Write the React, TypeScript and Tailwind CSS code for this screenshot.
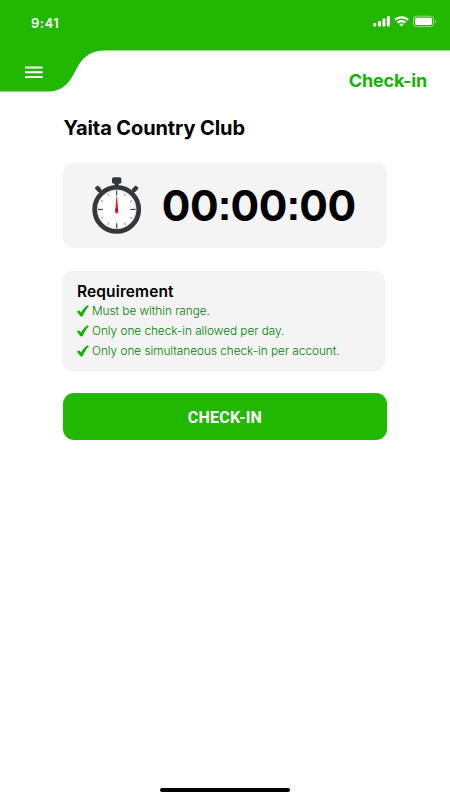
const requirements = [
  'Must be within range.',
  'Only one check-in allowed per day.',
  'Only one simultaneous check-in per account.',
];

function StatusIcons() {
  return (
    <svg width="64" height="14" viewBox="0 0 64 14" fill="none">
      <g fill="#fff">
        <rect x="0.3" y="8" width="3" height="3.6" rx="1" />
        <rect x="5" y="6" width="3" height="5.6" rx="1" />
        <rect x="9.4" y="3.6" width="3" height="8" rx="1" />
        <rect x="13.8" y="1" width="3" height="10.6" rx="1" />
        <path d="M21.2 4.1C25.1.2 31.9.2 35.8 4.1L34.2 5.7C31.1 2.8 25.9 2.8 22.8 5.7Z" />
        <path d="M23.8 6.8C26.4 4.4 30.6 4.4 33.2 6.8L31.6 8.4C29.8 6.8 27.2 6.8 25.4 8.4Z" />
        <path d="M26.3 9.3C27.6 8.2 29.4 8.2 30.7 9.3L28.5 11.6Z" />
        <rect x="42" y="2.8" width="17" height="7.2" rx="1.4" />
        <path d="M62 4.8C63.5 5.3 63.5 7.7 62 8.2Z" opacity=".5" />
      </g>
      <rect x="40.5" y="1.2" width="20" height="10.4" rx="2.8" stroke="#fff" strokeOpacity=".5" />
    </svg>
  );
}

function Stopwatch() {
  return (
    <svg width="52" height="60" viewBox="0 0 52 60">
      <g fill="#32393d">
        <rect x="21" y="1.2" width="9.4" height="6.6" rx="1.8" />
        <rect x="23.7" y="6" width="4" height="5" />
        <rect x="-2.2" y="-3" width="4.4" height="6" rx="1" transform="translate(7.2 12.9) rotate(-43)" />
        <rect x="-2.2" y="-3" width="4.4" height="6" rx="1" transform="translate(44.2 12.9) rotate(43)" />
        <path d="M8 12L13 17L11 19L6 14ZM43.400 12L38.400 17L40.400 19L45.400 14Z" />
      </g>
      <circle cx="25.700" cy="33.400" r="22" fill="#fff" stroke="#32393d" strokeWidth="4.8" />
      <circle cx="25.700" cy="33.400" r="19.300" fill="none" stroke="#c9cccd" strokeWidth="0.7" />
      {Array.from({ length: 12 }, (_, i) => (
        <path
          key={i}
          d={i % 3 === 0 ? 'M25.700 14.600V19.600' : 'M25.700 15.400V17.900'}
          stroke={i % 3 === 0 ? '#32393d' : '#73797b'}
          strokeWidth={i % 3 === 0 ? 1.1 : 0.8}
          transform={`rotate(${i * 30} 25.7 33.4)`}
        />
      ))}
      <path d="M25.400 20.500H26L27.300 36.500H24.100Z" fill="#f5141c" />
      <circle cx="25.700" cy="33.600" r="1.200" fill="#4b2528" />
      <circle cx="25.700" cy="36.500" r="1.100" fill="#f5141c" />
    </svg>
  );
}

function Check() {
  return (
    <svg width="12" height="12" viewBox="0 0 12 12" className="shrink-0">
      <path d="M0.300 6.200C1.700 4.900 2.900 5.600 4.200 7.500C5.700 4.600 7.800 1.800 10.200 0.500C11.500 0.100 12.100 0.900 11.400 1.800C8.800 4.400 7.300 7.500 5.900 10.700C5.200 11.700 3.400 11.600 2.900 10.700C2.100 9.100 1.500 8 0.300 7.200Z" fill="#12b000" />
    </svg>
  );
}

function Timer({ value }: { value: string }) {
  return (
    <div className="flex text-[42.500px] font-bold leading-[48px]">
      {value.split('').map((char, i) =>
        char === ':' ? (
          <span key={i} className="flex w-[12.400px] justify-center font-['Liberation_Sans',sans-serif] font-bold">:</span>
        ) : (
          <span key={i} className="flex w-[28.200px] justify-center">{char}</span>
        ),
      )}
    </div>
  );
}

export default function App() {
  return (
    <div className="flex h-[800px] w-[450px] flex-col overflow-hidden bg-white font-['Inter','Liberation_Sans',sans-serif] text-black">
      <header className="relative h-[92px] shrink-0">
        <svg className="absolute inset-0" width="450" height="92" viewBox="0 0 450 92">
          <path d="M0 0H450V50.500H105C92 50.500 84 56 78 66L73.500 74.500C68 84.500 61 91.500 48 91.500H0Z" fill="#22b802" />
        </svg>
        <div className="relative flex h-[50px] items-start justify-between pl-[31px] pr-[13px] pt-[15px]">
          <span className="text-[13px] font-semibold leading-4 tracking-[0.5px] text-white">9:41</span>
          <StatusIcons />
        </div>
        <div className="relative flex items-start justify-between pl-[25px] pr-[23px] pt-4">
          <svg width="18" height="13" viewBox="0 0 18 13" fill="#fff">
            <path d="M0 0.500H17.600V2.400H0ZM0 5.300H17.600V7.200H0ZM0 10.100H17.600V12H0Z" />
          </svg>
          <h1 className="mt-px whitespace-nowrap text-[18px] font-bold leading-7 tracking-[-0.200px] text-[#12b500]">Check-in</h1>
        </div>
      </header>

      <main className="flex flex-col pl-[62px] pr-[63px]">
        <h2 className="mt-[22px] whitespace-nowrap pl-[1.500px] text-[20px] font-bold leading-7 tracking-[-0.100px]">Yaita Country Club</h2>
        <section className="ml-px mt-[21px] flex h-[85px] w-[324px] items-start rounded-[10px] bg-[#f4f4f4] pl-[28px] pt-[13px]">
          <Stopwatch />
          <div className="ml-[19px] mt-[5.500px]">
            <Timer value="00:00:00" />
          </div>
        </section>
        <section className="mt-[22.500px] flex h-[100.500px] w-[323px] flex-col rounded-[10px] bg-[#f4f4f4] pl-[15px] pt-[11px]">
          <h3 className="whitespace-nowrap text-[15.500px] font-semibold leading-5 tracking-[0.120px]">Requirement</h3>
          <ul className="text-[11.800px] font-light tracking-[-0.030px] text-[#008000]">
            {requirements.map((text) => (
              <li key={text} className="flex h-[19.700px] items-center gap-[3px]">
                <Check />
                <span className="mt-[1.500px] whitespace-nowrap">{text}</span>
              </li>
            ))}
          </ul>
        </section>
        <button className="ml-px mt-[22px] h-[47px] w-[324px] rounded-[11px] bg-[#22b802] pt-[2px] font-['Roboto',sans-serif] text-[16px] font-bold tracking-[0.2px] text-white">CHECK-IN</button>
      </main>

      <div className="mb-[8px] ml-[160px] mt-auto h-[4px] w-[130px] rounded-full bg-black" />
    </div>
  );
}
